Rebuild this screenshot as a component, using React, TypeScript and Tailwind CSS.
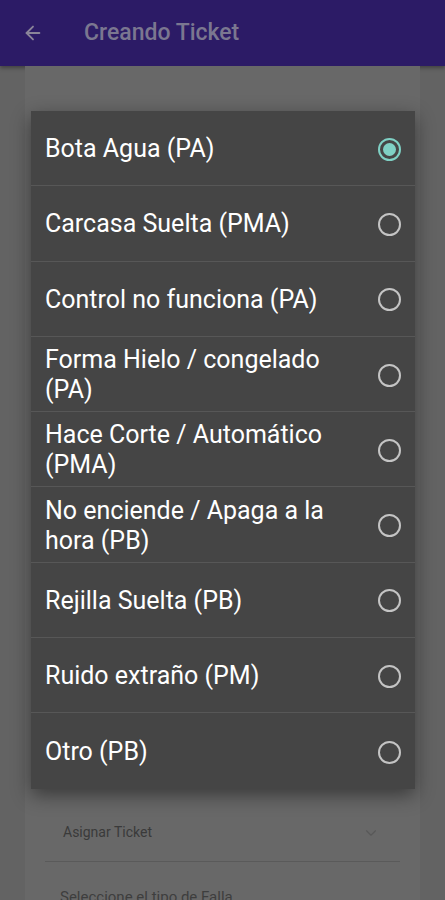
import { ArrowLeft, ChevronDown } from 'lucide-react'

const options = [
  { label: 'Bota Agua (PA)', checked: true },
  { label: 'Carcasa Suelta (PMA)' },
  { label: 'Control no funciona (PA)' },
  { label: 'Forma Hielo / congelado (PA)' },
  { label: 'Hace Corte / Automático (PMA)' },
  { label: 'No enciende / Apaga a la hora (PB)' },
  { label: 'Rejilla Suelta (PB)' },
  { label: 'Ruido extraño (PM)' },
  { label: 'Otro (PB)' },
]

function Radio({ checked }: { checked?: boolean }) {
  if (checked) {
    return (
      <span className="flex h-[23px] w-[23px] shrink-0 items-center justify-center rounded-full border-2 border-[#7fd0c4]">
        <span className="h-[13px] w-[13px] rounded-full bg-[#7fd0c4]" />
      </span>
    )
  }
  return <span className="h-[23px] w-[23px] shrink-0 rounded-full border-2 border-[#c4c4c4]" />
}

export default function App() {
  return (
    <div className="relative h-[900px] w-[445px] overflow-hidden bg-[#636363]" style={{ fontFamily: 'Roboto, "Noto Sans", sans-serif' }}>
      {/* app bar, dimmed */}
      <header className="flex h-[66px] items-center bg-[#2c1b66] shadow-[0_2px_4px_rgba(0,0,0,0.35)]">
        <ArrowLeft size={22} strokeWidth={2} className="ml-[22px] text-[#8a8599]" />
        <h1 className="ml-[40px] text-[23px] font-medium text-[#7b7790]">Creando Ticket</h1>
      </header>

      {/* form card behind the scrim */}
      <div className="mx-[25px] h-[834px] bg-[#686868] pt-[750px]">
        <div className="mx-[20px] flex items-center justify-between border-b border-[#5a5a5a] pb-[18px] pl-[18px] pr-[20px] pt-[6px]">
          <span className="text-[14px] text-[#3a3a3a]">Asignar Ticket</span>
          <ChevronDown size={18} strokeWidth={1.5} className="text-[#585858]" />
        </div>
        <p className="ml-[35px] mt-[26px] text-[15px] leading-[18px] text-[#3e3e3e]">Seleccione el tipo de Falla</p>
      </div>

      {/* dialog */}
      <div className="absolute left-[31px] top-[111px] w-[384px] bg-[#454545] shadow-[0_6px_18px_rgba(0,0,0,0.45)]">
        {options.map((o, i) => (
          <div
            key={i}
            className={`flex h-[75.3px] items-center justify-between pl-[14px] pr-[14px] pt-[2px] ${i < options.length - 1 ? 'border-b border-[#575757]' : ''}`}
          >
            <span className="max-w-[305px] text-[25px] leading-[30px] text-white">{o.label}</span>
            <Radio checked={o.checked} />
          </div>
        ))}
      </div>
    </div>
  )
}
